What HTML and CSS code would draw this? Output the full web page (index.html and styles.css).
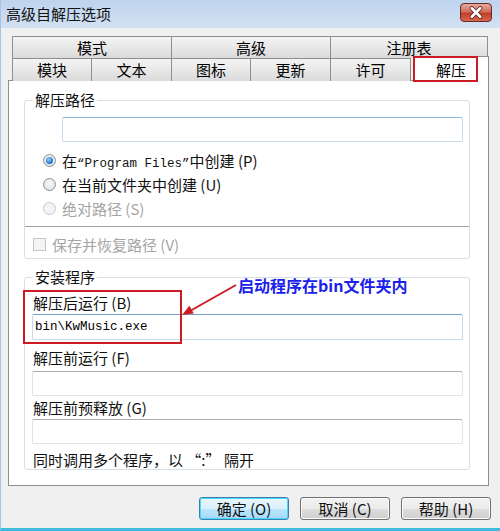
FILE: index.html
```html
<!DOCTYPE html>
<html lang="zh-CN">
<head>
    <meta charset="UTF-8">
    <title>高级自解压选项</title>
    <link rel="stylesheet" href="styles.css">
</head>
<body>
    <div class="window">
        <div class="titlebar">
            <span class="title">高级自解压选项</span>
            <div class="close">
                <svg width="32" height="19" viewBox="0 0 32 19">
                    <path d="M11.5 5 L20.5 14 M20.5 5 L11.5 14" stroke="#5a2520" stroke-width="4.6" stroke-linecap="round"/>
                    <path d="M11.5 5 L20.5 14 M20.5 5 L11.5 14" stroke="#fff" stroke-width="2.8" stroke-linecap="round"/>
                </svg>
            </div>
        </div>

        <div class="dialog">
            <div class="tabs">
                <div class="tab-row top">
                    <div class="tab">模式</div>
                    <div class="tab">高级</div>
                    <div class="tab">注册表</div>
                </div>
                <div class="tab-row bottom">
                    <div class="tab">模块</div>
                    <div class="tab">文本</div>
                    <div class="tab">图标</div>
                    <div class="tab">更新</div>
                    <div class="tab">许可</div>
                    <div class="tab active">解压</div>
                </div>
            </div>

            <div class="panel">
                <fieldset class="group path-group">
                    <legend>解压路径</legend>
                    <div class="field focus"></div>
                    <div class="radio-row first"><span class="radio checked"></span><span>在<span class="mono">“Program Files”</span>中创建 (P)</span></div>
                    <div class="radio-row"><span class="radio"></span><span>在当前文件夹中创建 (U)</span></div>
                    <div class="radio-row disabled"><span class="radio"></span><span>绝对路径 (S)</span></div>
                    <div class="separator"></div>
                    <div class="check-row disabled"><span class="checkbox"></span><span>保存并恢复路径 (V)</span></div>
                </fieldset>

                <fieldset class="group install-group">
                    <legend>安装程序</legend>
                    <div class="field-label">解压后运行 (B)</div>
                    <div class="field tall hover"><span class="mono">bin\KwMusic.exe</span></div>
                    <div class="field-label gap-f">解压前运行 (F)</div>
                    <div class="field gap-f-field"></div>
                    <div class="field-label gap-g">解压前预释放 (G)</div>
                    <div class="field"></div>
                    <div class="note">同时调用多个程序，以 “:” 隔开</div>
                </fieldset>
            </div>

            <div class="buttons">
                <div class="btn default">确定 (O)</div>
                <div class="btn">取消 (C)</div>
                <div class="btn">帮助 (H)</div>
            </div>
        </div>

        <!-- annotation drawn over the dialog -->
        <div class="callout">启动程序在bin文件夹内</div>
        <svg class="markup" width="500" height="531" viewBox="0 0 500 531">
            <rect x="414" y="57" width="63" height="24" fill="none" stroke="#cc1b22" stroke-width="2"/>
            <rect x="24" y="291" width="157" height="52" fill="none" stroke="#cc1b22" stroke-width="2"/>
            <line x1="236" y1="285" x2="190" y2="311" stroke="#cc1b22" stroke-width="2"/>
            <polygon points="182,315 189.4,305.8 193.8,313.6" fill="#cc1b22"/>
        </svg>
    </div>
</body>
</html>
```

FILE: styles.css
```css
body {
    margin: 0;
    font-family: "Noto Sans CJK SC", "Liberation Sans", sans-serif;
    font-size: 15px;
    color: #111;
    background: #f0f0f0;
}
.window {
    position: relative;
    width: 500px;
    height: 531px;
    box-sizing: border-box;
    border-left: 1px solid #a9c4e3;
    border-bottom: 3px solid #3fbcdd;
    background: #f0f0f0;
    overflow: hidden;
}
.titlebar {
    height: 28px;
    display: flex;
    align-items: center;
    padding-left: 5px;
    background: linear-gradient(#bed3ed, #d3e2f3);
}
.title {
    font-size: 15px;
    color: #111;
    line-height: 18px;
}
.close {
    margin-left: auto;
    margin-right: 8px;
    margin-top: -3px;
    width: 32px;
    height: 19px;
    box-sizing: border-box;
    border: 1px solid #6a2a24;
    border-radius: 4px;
    background: linear-gradient(#e7a89c, #d2705e 45%, #c33e2a 55%, #d7674f);
    display: flex;
    align-items: center;
    justify-content: center;
}
.close svg {
    display: block;
    margin-top: -1px;
}
.dialog {
    padding: 8px 11px 0 7px;
}
.tabs {
    margin-left: 4px;
    width: 477px;
}
.tab-row {
    display: grid;
    height: 22px;
}
.tab-row.top {
    grid-template-columns: 159px 159px 157px;
}
.tab-row.bottom {
    grid-template-columns: 79px 80px 79px 80px 80px 79px;
}
.tab {
    border: 1px solid #8e8f8f;
    border-bottom: 0;
    margin-right: -1px;
    background: linear-gradient(#f3f3f3, #e8e8e8 50%, #dadada);
    text-align: center;
    line-height: 21px;
    white-space: nowrap;
    color: #000;
}
.tab.active {
    position: relative;
    z-index: 1;
    background: #fff;
    margin: -2px 0 -1px 3px;
    line-height: 25px;
}
.panel {
    width: 481px;
    height: 406px;
    box-sizing: border-box;
    border: 1px solid #8e8f8f;
    background: #fff;
    padding: 0 18px 0 15px;
}
.group {
    margin: 10px 0 0;
    padding: 0 0 2px;
    border: 1px solid #d5dfe5;
    border-radius: 3px;
    min-inline-size: 0;
}
.group legend {
    margin-left: 8px;
    padding: 0 2px;
    line-height: 18px;
}
.install-group {
    margin-top: 9px;
    padding-bottom: 0;
}
.field {
    height: 25px;
    box-sizing: border-box;
    margin: 1px 6px 0 7px;
    border: 1px solid #dfe3e8;
    border-top-color: #abadb3;
    border-radius: 2px;
    background: #fff;
    display: flex;
    align-items: center;
    padding-left: 2px;
}
.field.tall {
    height: 26px;
}
.field.focus {
    margin: 8px 6px 0 37px;
    border-color: #c5daed;
    border-top-color: #8fb8df;
}
.field.hover {
    border-color: #c5daed;
    border-top-color: #7a9fc4;
}
.mono {
    font-family: "Liberation Mono", monospace;
    font-size: 12.5px;
}
.field .mono {
    color: #000;
}
.radio-row {
    display: flex;
    align-items: center;
    height: 24px;
    margin-left: 18px;
    gap: 6px;
    white-space: nowrap;
}
.radio-row.first {
    margin-top: 6px;
}
.radio {
    width: 13px;
    height: 13px;
    box-sizing: border-box;
    border-radius: 50%;
    border: 1px solid #8d9095;
    background: radial-gradient(circle at 50% 40%, #f6f6f6, #dcdcdc);
    display: flex;
    align-items: center;
    justify-content: center;
}
.radio.checked::after {
    content: "";
    width: 7px;
    height: 7px;
    border-radius: 50%;
    background: radial-gradient(circle at 40% 35%, #8fd3fb, #2a7dd0 60%, #17519a);
}
.disabled {
    color: #a5a5a5;
}
.disabled .radio {
    border-color: #c8c8c8;
    background: #f4f4f4;
}
.separator {
    margin-top: 6px;
    border-top: 1px solid #a0a0a0;
    border-bottom: 1px solid #fff;
}
.check-row {
    display: flex;
    align-items: center;
    height: 24px;
    margin: 4px 0 0 8px;
    gap: 6px;
}
.checkbox {
    width: 13px;
    height: 13px;
    box-sizing: border-box;
    border: 1px solid #c4c4c4;
    background: #f4f4f4;
}
.field-label {
    line-height: 20px;
    margin: 7px 0 0 8px;
}
.field-label.gap-f {
    margin-top: 8px;
}
.field.gap-f-field {
    margin-top: 3px;
}
.field-label.gap-g {
    margin-top: 2px;
}
.note {
    line-height: 18px;
    margin: 7px 0 0 8px;
    white-space: nowrap;
}
.buttons {
    display: flex;
    justify-content: flex-end;
    gap: 11px;
    margin: 11px -2px 0 0;
}
.btn {
    width: 90px;
    height: 23px;
    box-sizing: border-box;
    border: 1px solid #707070;
    border-radius: 3px;
    background: linear-gradient(#f2f2f2, #ebebeb 50%, #dddddd 50%, #cfcfcf);
    box-shadow: inset 0 0 0 1px #fcfcfc;
    text-align: center;
    line-height: 21px;
}
.btn.default {
    border-color: #3c7fb1;
    background: linear-gradient(#eaf6fd, #d9f0fc 50%, #bee6fd 50%, #a7d9f5);
    box-shadow: inset 0 0 0 1px #48d8fb;
}
.callout {
    position: absolute;
    z-index: 2;
    left: 237px;
    top: 275px;
    font-size: 16px;
    font-weight: bold;
    line-height: 20px;
    color: #1a22ea;
    white-space: nowrap;
}
.markup {
    position: absolute;
    z-index: 2;
    left: -1px;
    top: 0;
    pointer-events: none;
}
```
